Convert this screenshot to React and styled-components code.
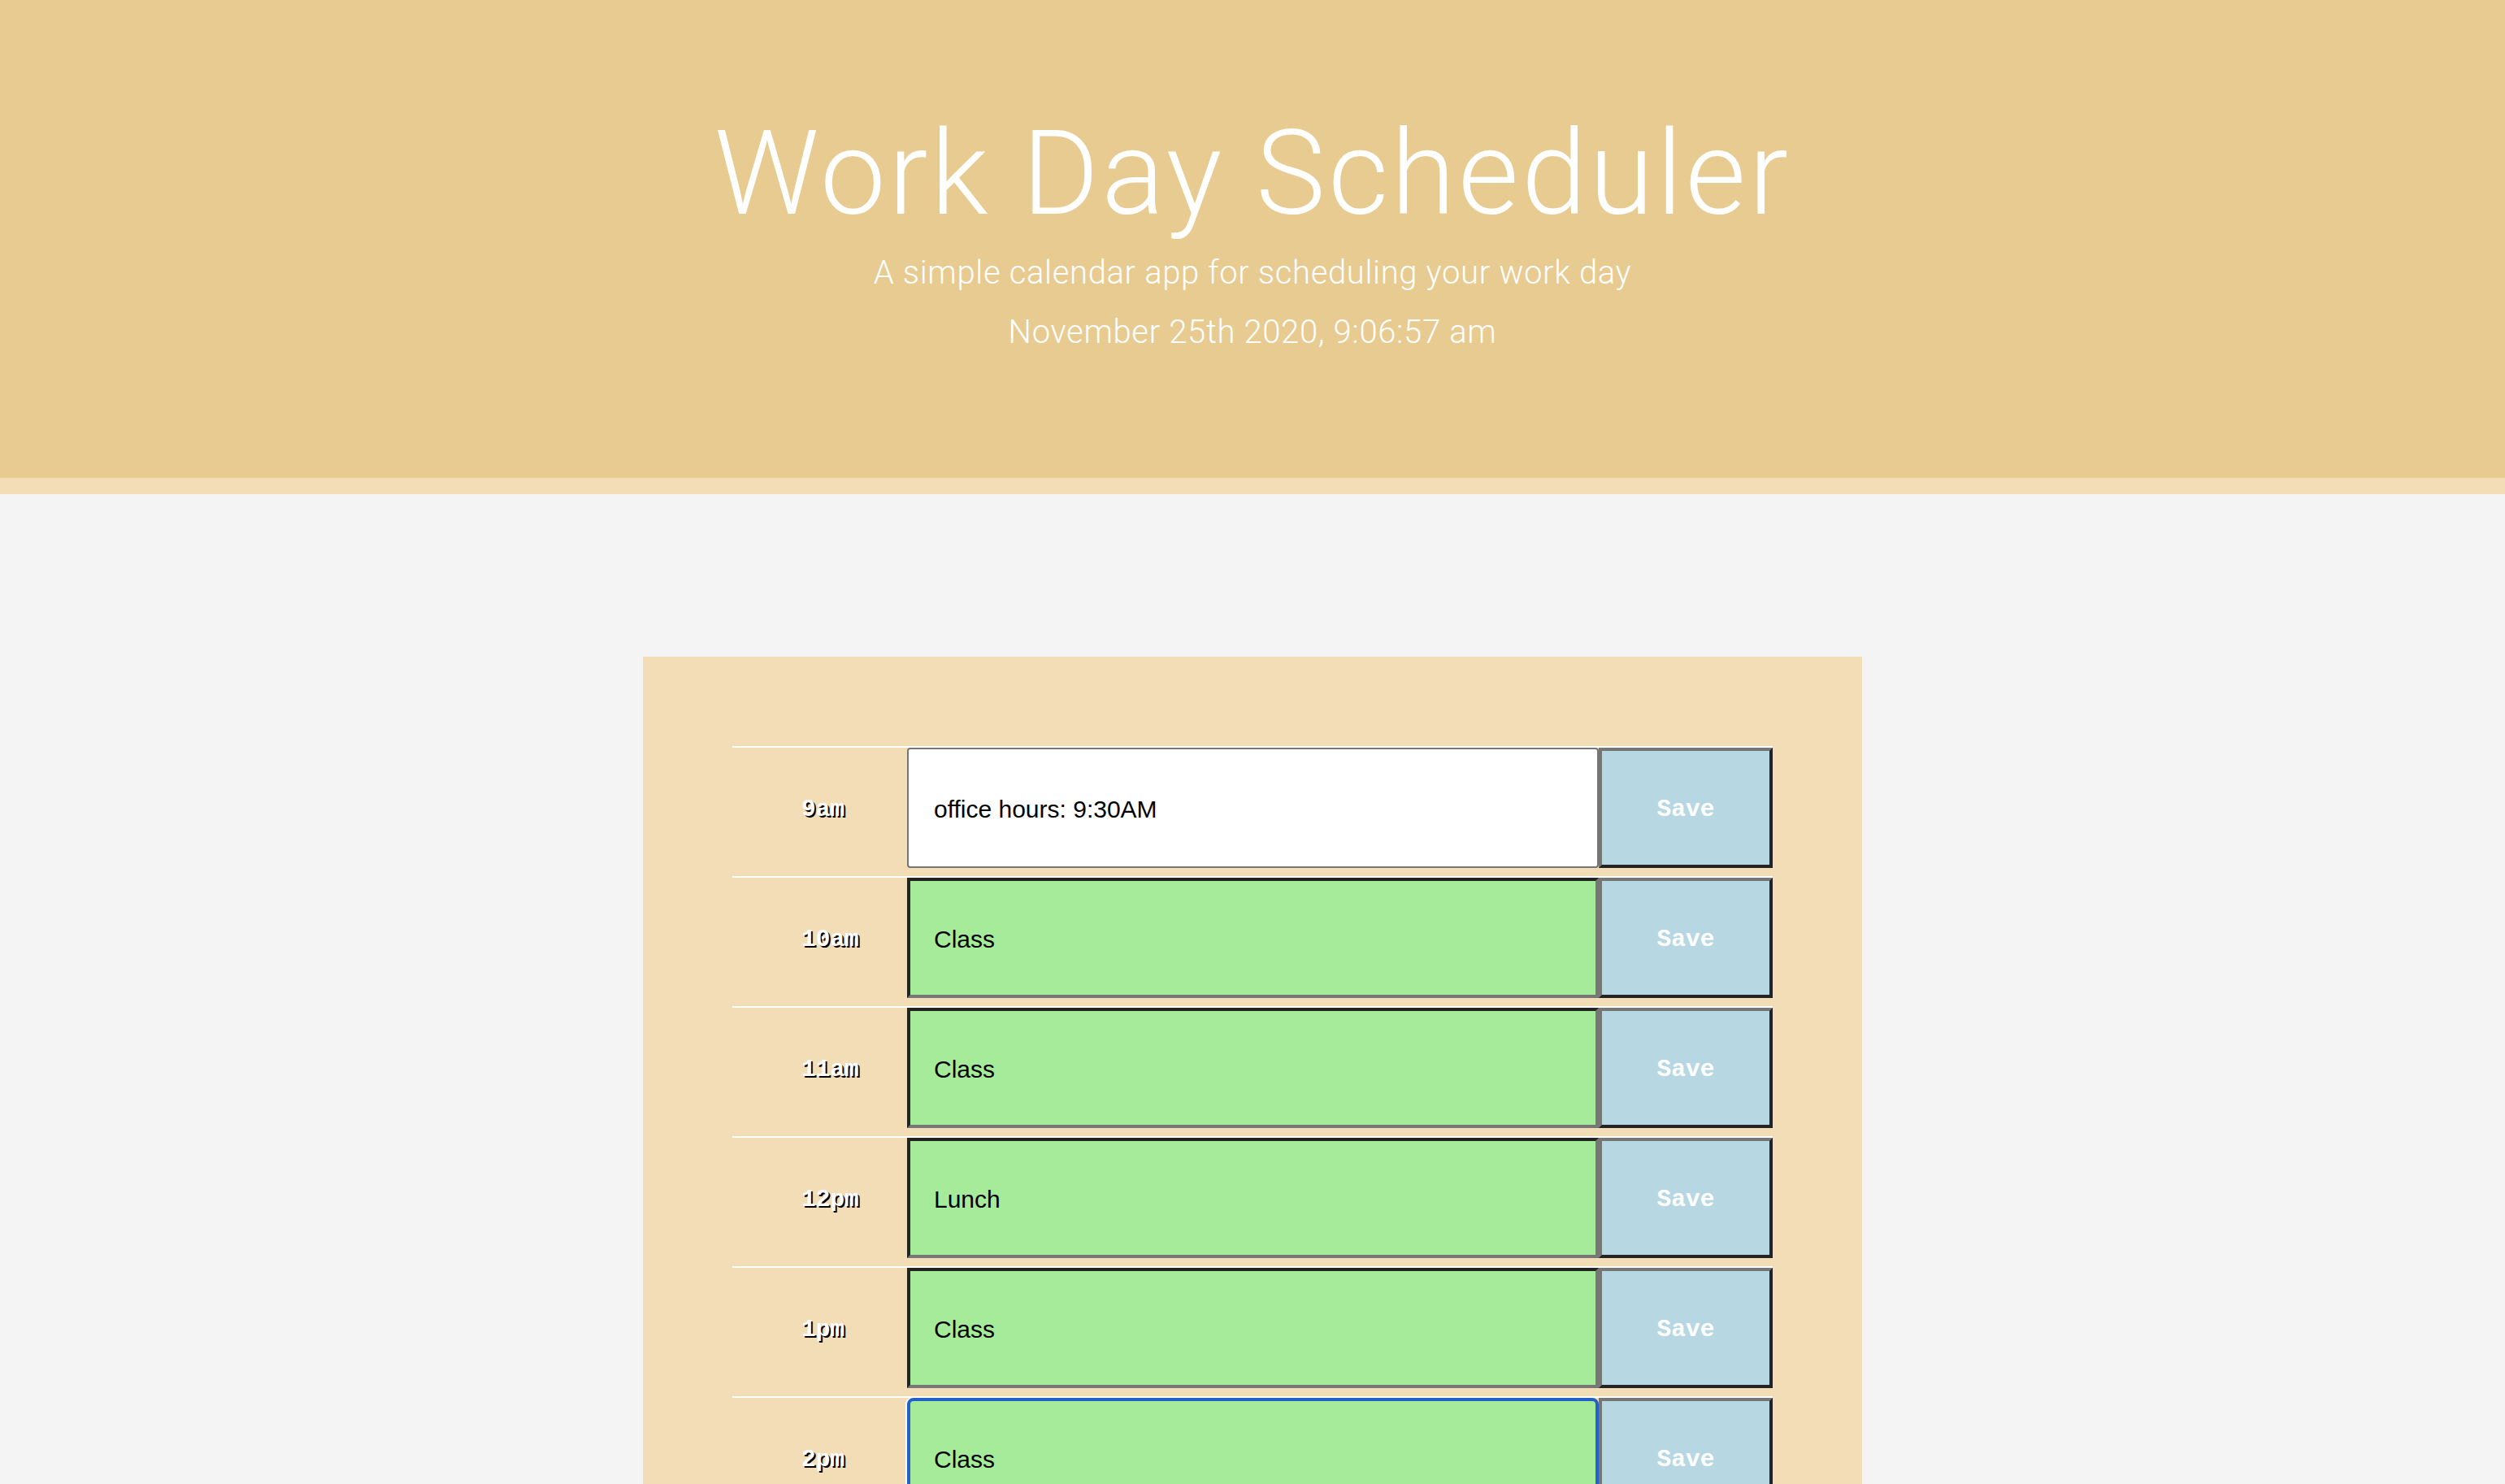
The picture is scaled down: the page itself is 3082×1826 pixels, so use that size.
import React, { useEffect, useRef } from "react";
import styled, { createGlobalStyle, css } from "styled-components";

const GlobalStyle = createGlobalStyle`
  html, body {
    margin: 0;
    overflow: hidden;
  }
  body {
    background: #f4f4f4;
    font-family: "Liberation Sans", Arial, sans-serif;
  }
`;

//header
const Jumbotron = styled.header`
  box-sizing: border-box;
  height: 608px;
  padding-top: 128px;
  background: #e8cb91;
  border-bottom: 20px solid #f2ddb7;
  text-align: center;
  color: #ffffff;
`;

const Title = styled.h1`
  margin: 0;
  font-family: Roboto, "Liberation Sans", sans-serif;
  font-weight: 300;
  font-size: 144px;
  line-height: 172px;
  letter-spacing: 3.4px;
`;

const Lead = styled.p`
  margin: ${(p) => p.$gap}px 0 0;
  font-family: Roboto, "Liberation Sans", sans-serif;
  font-weight: 300;
  font-size: 40px;
  line-height: 60px;
  letter-spacing: 0.65px;
`;

//planner
const Main = styled.main`
  padding-top: 200px;
`;

const Planner = styled.div`
  box-sizing: border-box;
  width: 1500px;
  margin: 0 auto;
  padding: 110px;
  background: #f2ddb7;
`;

const Row = styled.div`
  display: grid;
  grid-template-columns: 215px 851px 214px;
  border-top: 2px solid #ffffff;
  padding-bottom: 10px;
`;

const Hour = styled.div`
  display: flex;
  align-items: center;
  padding-left: 85px;
  padding-top: 3px;
  font-family: "Liberation Mono", "Courier New", monospace;
  font-weight: bold;
  font-size: 29.5px;
  color: #ffffff;
  text-shadow: 2px 2px 0 #000000;
`;

const statusStyles = {
  present: css`
    background: #ffffff;
    border: 2px solid #767676;
    border-radius: 4px;
    padding: 57px 31px 0;
  `,
  future: css`
    background: #a6eb9a;
    border: 4px solid;
    border-color: #232323 #767676 #767676 #232323;
    padding: 55px 29px 0;
  `,
};

const Entry = styled.textarea`
  box-sizing: border-box;
  display: block;
  width: 100%;
  height: 148px;
  margin: 0;
  resize: none;
  overflow: hidden;
  font-family: "Liberation Sans", Arial, sans-serif;
  font-size: 30px;
  color: #000000;
  caret-color: #000000;
  outline: none;
  ${(p) => statusStyles[p.$status]}
  ${(p) =>
    p.$active &&
    css`
      border: 4px solid #2361c9;
      border-radius: 8px;
      box-shadow: -2px 0 0 #ffffff;
    `}
`;

const SaveBtn = styled.button`
  box-sizing: border-box;
  height: 148px;
  margin: 0;
  padding: 4px 0 0;
  background: #b7d8e2;
  border: 4px solid;
  border-color: #767676 #232323 #232323 #767676;
  color: #ffffff;
  font-family: "Liberation Mono", "Courier New", monospace;
  font-weight: bold;
  font-size: 29.5px;
  cursor: pointer;
`;

const hours = [
  { label: "9am", text: "office hours: 9:30AM", status: "present" },
  { label: "10am", text: "Class", status: "future" },
  { label: "11am", text: "Class", status: "future" },
  { label: "12pm", text: "Lunch", status: "future" },
  { label: "1pm", text: "Class", status: "future" },
  { label: "2pm", text: "Class", status: "future", active: true },
  { label: "3pm", text: "", status: "future" },
  { label: "4pm", text: "", status: "future" },
  { label: "5pm", text: "", status: "future" },
];

function TimeBlock({ label, text, status, active }) {
  const ref = useRef(null);

  useEffect(() => {
    if (active && ref.current) {
      const el = ref.current;
      el.focus({ preventScroll: true });
      el.setSelectionRange(el.value.length, el.value.length);
    }
  }, [active]);

  return (
    <Row>
      <Hour>{label}</Hour>
      <Entry ref={ref} $status={status} $active={active} defaultValue={text} />
      <SaveBtn>Save</SaveBtn>
    </Row>
  );
}

export default function App() {
  return (
    <>
      <GlobalStyle />
      <Jumbotron>
        <Title>Work Day Scheduler</Title>
        <Lead $gap={6}>A simple calendar app for scheduling your work day</Lead>
        <Lead $gap={13}>November 25th 2020, 9:06:57 am</Lead>
      </Jumbotron>
      <Main>
        <Planner>
          {hours.map((h) => (
            <TimeBlock key={h.label} {...h} />
          ))}
        </Planner>
      </Main>
    </>
  );
}
